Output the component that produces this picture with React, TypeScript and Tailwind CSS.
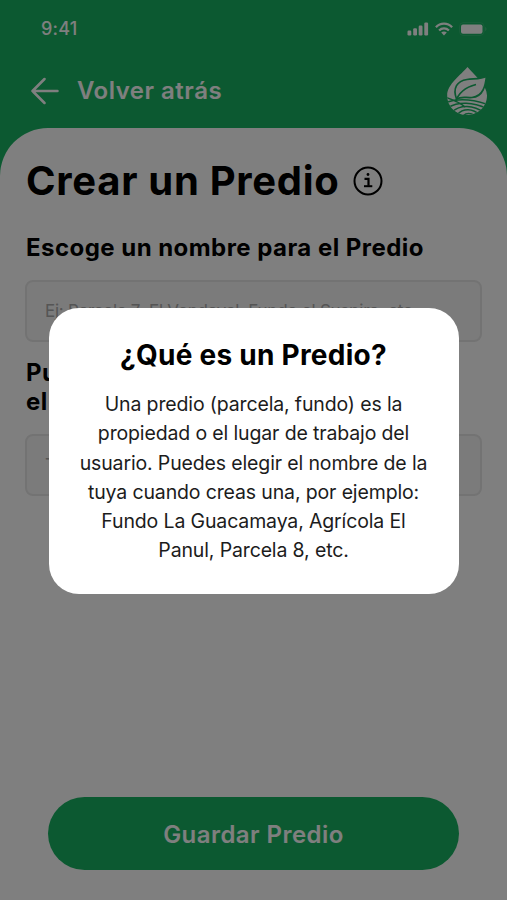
import React, { useState } from 'react';

const SignalIcon = () => (
  <svg width="22" height="14" viewBox="0 0 22 14" fill="currentColor">
    <rect x="0.5" y="8.5" width="3.8" height="5" rx="1.2" />
    <rect x="6.2" y="6.3" width="3.8" height="7.2" rx="1.2" />
    <rect x="11.7" y="3.6" width="3.8" height="9.9" rx="1.2" />
    <rect x="17.3" y="0.6" width="3.8" height="12.9" rx="1.2" />
  </svg>
);

const WifiIcon = () => (
  <svg width="18" height="14" viewBox="0 0 18 14" fill="none" stroke="currentColor" strokeWidth="2.3">
    <path d="M0.9 5.2C5.4 0.5 12.6 0.5 17.1 5.2" />
    <path d="M4.1 8.5C6.9 5.7 11.1 5.7 13.9 8.5" />
    <path d="M6.2 10.6C7.8 9.1 10.2 9.1 11.8 10.6L9 13.5Z" fill="currentColor" stroke="none" />
  </svg>
);

const BatteryIcon = () => (
  <svg width="28" height="14" viewBox="0 0 28 14">
    <rect x="0.5" y="0.5" width="24.5" height="13" rx="4" fill="none" stroke="currentColor" opacity="0.1" />
    <rect x="2" y="2.4" width="21.5" height="9.4" rx="2" fill="currentColor" />
    <path d="M26 5v4c1-.3 1.6-1 1.6-2S27 5.300 26 5Z" fill="currentColor" opacity="0.15" />
  </svg>
);

const Logo = () => (
  <svg width="42" height="50" viewBox="0 0 42 50">
    <defs>
      <clipPath id="drop">
        <path d="M21.500 1C15 9 1.200 18 1.200 29.500C1.200 41 10.200 49 21 49S41 41 41 29.500C41 18.500 28 9 21.500 1Z" />
      </clipPath>
    </defs>
    <g clipPath="url(#drop)">
      <rect width="42" height="50" fill="#fff" />
      <g fill="none" stroke="#18b362" strokeWidth="1.500">
        <path d="M0 36.500C11 32.500 24 32.500 42 38.500" />
        <path d="M0 31.500C8 34 14 37 19 41" />
        <path d="M2 41.500C12 35.500 27 35.500 42 43" />
        <path d="M6 46C14 38.500 27 38.500 39 47" />
        <path d="M11 49C17 42 27 42 34 49.500" />
        <path d="M17 50C20 46.500 25 46.500 29 50" />
      </g>
    </g>
    {/* Leaf */}
    <path
      d="M10.500 33C6.500 22 11 15 21 13.500C28 12.500 35 13.500 40.500 10C39.500 19 37.500 30.500 26 31.500C20 32 15.500 30 10.500 33Z"
      fill="#fff"
      stroke="#18b362"
      strokeWidth="1.700"
    />
    <path d="M9.500 36C12 28 18.500 21.500 30 18.500" fill="none" stroke="#18b362" strokeWidth="1.700" />
  </svg>
);

const ArrowIcon = () => (
  <svg width="28" height="28" viewBox="0 0 28 28" fill="none" stroke="currentColor" strokeWidth="2.5" strokeLinecap="round" strokeLinejoin="round">
    <path d="M26.500 14H1.500M13.500 2L1.500 14l12 12" />
  </svg>
);

const InfoIcon = () => (
  <svg width="30" height="30" viewBox="0 0 30 30" fill="none" stroke="currentColor" strokeWidth="2">
    <circle cx="15" cy="15" r="13.500" />
    <path d="M11.500 12.800H15.500V19.800" strokeWidth="2.200" />
    <path d="M11 20.200H19.300" strokeWidth="2" />
    <circle cx="15" cy="8.500" r="1.400" fill="currentColor" stroke="none" />
  </svg>
);

interface FieldProps {
  label: React.ReactNode;
  placeholder: string;
}

const Field: React.FC<FieldProps> = ({ label, placeholder }) => (
  <label className="block">
    <span className="ml-px block text-2xl leading-[29px] font-bold tracking-[0.46px] text-black">{label}</span>
    <input
      className="mt-[18px] block h-[62px] w-full rounded-lg border-2 border-[#e6e6e6] bg-[#f7f7f7] px-[18px] text-[17px] tracking-[-0.24px] placeholder:text-[#aaaaaa]"
      placeholder={placeholder}
    />
  </label>
);

export default function App() {
  const [showInfo, setShowInfo] = useState(true);

  return (
    <div className="relative flex h-[900px] w-[507px] flex-col overflow-hidden bg-[#18b362] font-['Inter',sans-serif]">
      {/* Status bar */}
      <div className="flex h-[58px] shrink-0 items-center justify-between pr-[20px] pl-[41px] text-white">
        <span className="text-lg font-medium tracking-[0.2px]">9:41</span>
        <div className="flex items-center gap-[6px]">
          <SignalIcon />
          <WifiIcon />
          <BatteryIcon />
        </div>
      </div>

      {/* Header */}
      <header className="flex h-[70px] shrink-0 items-center justify-between pr-[19px] pb-1 pl-[31px] text-white">
        <button className="flex items-center gap-[18px]">
          <ArrowIcon />
          <span className="text-2xl font-semibold tracking-[0.5px]">Volver atrás</span>
        </button>
        <Logo />
      </header>

      {/* Form */}
      <main className="flex grow flex-col rounded-t-[48px] bg-white px-[25px]">
        <div className="mt-[28px] ml-px flex items-center gap-[13px]">
          <h1 className="text-[40px] leading-[50px] font-bold tracking-[0.7px] text-black">Crear un Predio</h1>
          <button onClick={() => setShowInfo(true)}>
            <InfoIcon />
          </button>
        </div>
        <div className="mt-[27px] flex flex-col gap-[16px]">
          <Field
            label="Escoge un nombre para el Predio"
            placeholder="Ej: Parcela 7; El Vendaval, Fundo el Suspiro, etc"
          />
          <Field label={<>Puedes indicar dónde está<br />el Predio</>} placeholder="Talca, Maule" />
        </div>
        <button className="mx-[23px] mt-auto mb-[30px] h-[73px] rounded-full bg-[#18b362] pt-0.5 text-2xl font-semibold tracking-[0.45px] text-white">
          Guardar Predio
        </button>
      </main>

      {/* Info modal */}
      {showInfo && (
        <div className="absolute inset-0 flex items-center justify-center bg-black/50" onClick={() => setShowInfo(false)}>
          <div className="mt-[2px] h-[286px] w-[410px] rounded-[30px] bg-white px-[28px] pt-[30px] text-center text-black">
            <h2 className="text-[28px] leading-[34px] font-bold tracking-[0.25px]">¿Qué es un Predio?</h2>
            <p className="mt-[18px] text-[19.5px] leading-[29.3px] tracking-[-0.14px] whitespace-nowrap text-[#1c1c1c]">
              Una predio (parcela, fundo) es la<br />
              propiedad o el lugar de trabajo del<br />
              usuario. Puedes elegir el nombre de la<br />
              tuya cuando creas una, por ejemplo:<br />
              Fundo La Guacamaya, Agrícola El<br />
              Panul, Parcela 8, etc.
            </p>
          </div>
        </div>
      )}
    </div>
  );
}
